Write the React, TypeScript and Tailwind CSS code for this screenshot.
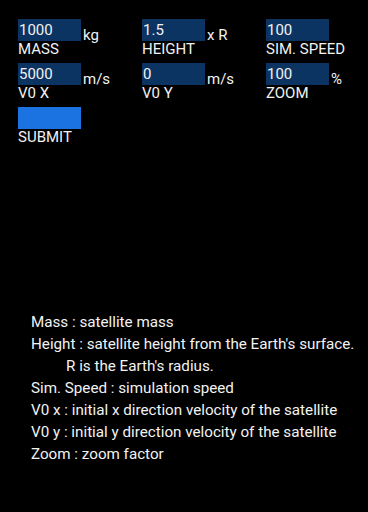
import React from "react";

const font = { fontFamily: "Roboto, 'Noto Sans', sans-serif" };

function Field({ value, label, unit }: { value: string; label: string; unit: string }) {
  return (
    <div className="flex items-start">
      <div className="flex flex-col">
        <input
          readOnly
          defaultValue={value}
          className="w-[63px] h-[22px] bg-[#0c3462] text-[#f2f2f2] text-[15px] leading-[22px] pl-[1px] outline-none border-0"
          style={font}
        />
        <div className="text-[15px] leading-[17px] text-[#f2f2f2] whitespace-nowrap">{label}</div>
      </div>
      <span className="ml-[2px] mt-[8px] text-[15px] leading-[17px] text-[#f2f2f2] whitespace-nowrap">{unit}</span>
    </div>
  );
}

export default function App() {
  return (
    <div className="w-[368px] h-[512px] bg-black text-[#f2f2f2] overflow-hidden" style={font}>
      <div className="pt-[19px] pl-[18px] grid grid-cols-[124px_124px_124px] gap-y-[5px]">
        <Field value="1000" label="MASS" unit="kg" />
        <Field value="1.5" label="HEIGHT" unit="x R" />
        <Field value="100" label="SIM. SPEED" unit="" />
        <Field value="5000" label="V0 X" unit="m/s" />
        <Field value="0" label="V0 Y" unit="m/s" />
        <Field value="100" label="ZOOM" unit="%" />
        <div className="flex flex-col">
          <button className="w-[63px] h-[22px] bg-[#1a73e0] border-0" />
          <div className="text-[15px] leading-[17px] whitespace-nowrap">SUBMIT</div>
        </div>
      </div>
      <div className="mt-[165px] pl-[31px] text-[15.2px] leading-[22px] whitespace-nowrap">
        <div>Mass : satellite mass</div>
        <div>Height : satellite height from the Earth's surface.</div>
        <div className="pl-[35px]">R is the Earth's radius.</div>
        <div>Sim. Speed : simulation speed</div>
        <div>V0 x : initial x direction velocity of the satellite</div>
        <div>V0 y : initial y direction velocity of the satellite</div>
        <div>Zoom : zoom factor</div>
      </div>
    </div>
  );
}
